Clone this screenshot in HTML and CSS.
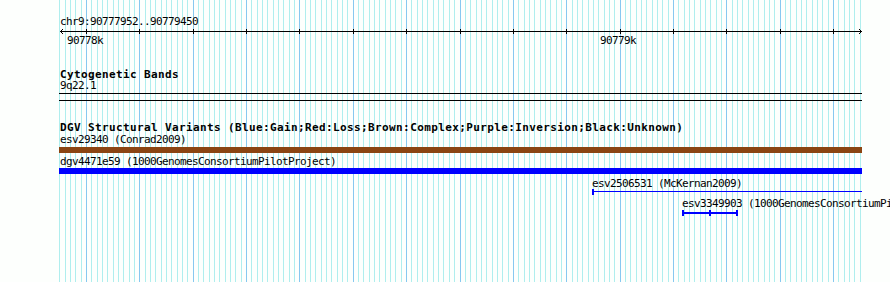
FILE: index.html
```html
<!DOCTYPE html>
<html lang="en">
<head>
    <meta charset="UTF-8">
    <meta name="viewport" content="width=device-width, initial-scale=1.0">
    <title>chr9:90777952..90779450</title>
    <link rel="stylesheet" href="styles.css">
</head>
<body>
    <div class="panel">
        <svg class="grid" id="grid" width="890" height="282"></svg>

        <div class="tracks">
            <!-- Ruler -->
            <div class="ruler">
                <div class="label">chr9:90777952..90779450</div>
                <svg class="axis" id="axis" width="803" height="8">
                    <rect x="1" y="4" width="802" height="1"></rect>
                    <rect x="2" y="3" width="1" height="1"></rect>
                    <rect x="2" y="5" width="1" height="1"></rect>
                    <rect x="3" y="2" width="1" height="1"></rect>
                    <rect x="3" y="6" width="1" height="1"></rect>
                    <rect x="801" y="3" width="1" height="1"></rect>
                    <rect x="801" y="5" width="1" height="1"></rect>
                    <rect x="800" y="2" width="1" height="1"></rect>
                    <rect x="800" y="6" width="1" height="1"></rect>
                </svg>
                <div class="tick-labels">
                    <span class="tick-label tick-first">90778k</span>
                    <span class="tick-label tick-second">90779k</span>
                </div>
            </div>

            <!-- Cytogenetic bands -->
            <div class="track cyto">
                <div class="track-title">Cytogenetic Bands</div>
                <div class="label">9q22.1</div>
                <div class="band"></div>
            </div>

            <!-- DGV -->
            <div class="track dgv">
                <div class="track-title">DGV Structural Variants (Blue:Gain;Red:Loss;Brown:Complex;Purple:Inversion;Black:Unknown)</div>

                <div class="label label-tight">esv29340 (Conrad2009)</div>
                <div class="bar bar-brown"></div>

                <div class="label label-loose">dgv4471e59 (1000GenomesConsortiumPilotProject)</div>
                <div class="bar bar-blue"></div>

                <div class="label feature-mckernan">esv2506531 (McKernan2009)</div>
                <svg class="segment seg-mckernan" width="270" height="6">
                    <rect x="0" y="0" width="2" height="6"></rect>
                    <rect x="0" y="2" width="270" height="1"></rect>
                </svg>

                <div class="label feature-pilot">esv3349903 (1000GenomesConsortiumPilotProject)</div>
                <svg class="segment seg-pilot" width="56" height="6">
                    <rect x="0" y="0" width="2" height="6"></rect>
                    <rect x="27" y="0" width="2" height="6"></rect>
                    <rect x="54" y="0" width="2" height="6"></rect>
                    <rect x="0" y="2" width="56" height="2"></rect>
                </svg>
            </div>
        </div>
    </div>

    <script>
        // grid: one minor line every 10bp, a major line every 100bp
        function drawGrid() {
            const grid = document.getElementById('grid');
            const axis = document.getElementById('axis');
            const ns = 'http://www.w3.org/2000/svg';
            const start = 59.3;
            const step = 5.336;

            for (let i = 0; i <= 150; i++) {
                const x = Math.round(start + i * step);
                const major = (i - 5) % 10 === 0;

                const line = document.createElementNS(ns, 'rect');
                line.setAttribute('x', x);
                line.setAttribute('y', 0);
                line.setAttribute('width', 1);
                line.setAttribute('height', 282);
                line.setAttribute('class', major ? 'major' : 'minor');
                grid.appendChild(line);

                if (major) {
                    const tick = document.createElementNS(ns, 'rect');
                    tick.setAttribute('x', x - 59);
                    tick.setAttribute('y', 2);
                    tick.setAttribute('width', 1);
                    tick.setAttribute('height', 5);
                    axis.appendChild(tick);
                }
            }
        }
        drawGrid();
    </script>
</body>
</html>
```

FILE: styles.css
```css
body {
    margin: 0;
    background: #fdfffd;
    color: #000;
    font-family: "DejaVu Sans Mono", "Liberation Mono", monospace;
    font-size: 11px;
}

.panel {
    position: relative;
    width: 890px;
    height: 282px;
    overflow: hidden;
}

/* Background grid */
.grid {
    position: absolute;
    top: 0;
    left: 0;
    shape-rendering: crispEdges;
}

.grid .minor {
    fill: #afeeee;
}

.grid .major {
    fill: #87c8f0;
}

.tracks {
    position: relative;
    padding-left: 59px;
    white-space: nowrap;
}

.label {
    height: 11px;
    line-height: 11px;
    margin-left: 1px;
    letter-spacing: -0.62px;
}

.track-title {
    height: 11px;
    line-height: 11px;
    margin-left: 1px;
    font-weight: bold;
    letter-spacing: 0.38px;
}

/* Ruler */
.ruler {
    padding-top: 16px;
}

.axis {
    display: block;
    fill: #000;
    shape-rendering: crispEdges;
}

.tick-labels {
    display: flex;
    height: 11px;
    line-height: 11px;
    letter-spacing: -0.62px;
}

.tick-label {
    width: 36px;
}

.tick-first {
    margin-left: 8px;
}

.tick-second {
    margin-left: 497px;
}

/* Cytogenetic bands */
.cyto {
    margin-top: 23px;
}

.band {
    width: 803px;
    height: 6px;
    margin-top: 2px;
    border-top: 1px solid #000;
    border-bottom: 1px solid #000;
}

/* DGV structural variants */
.dgv {
    margin-top: 21px;
}

.label-tight {
    margin-top: 1px;
}

.label-loose {
    margin-top: 3px;
}

.bar {
    width: 803px;
    height: 6px;
}

.bar-brown {
    margin-top: 2px;
    background: #8b4513;
}

.bar-blue {
    margin-top: 1px;
    background: #0000ff;
}

.segment {
    display: block;
    fill: #0000ff;
    shape-rendering: crispEdges;
}

.feature-mckernan {
    margin-top: 4px;
    margin-left: 533px;
}

.seg-mckernan {
    margin-left: 533px;
}

.feature-pilot {
    margin-top: 3px;
    margin-left: 623px;
}

.seg-pilot {
    margin-top: 1px;
    margin-left: 623px;
}
```
